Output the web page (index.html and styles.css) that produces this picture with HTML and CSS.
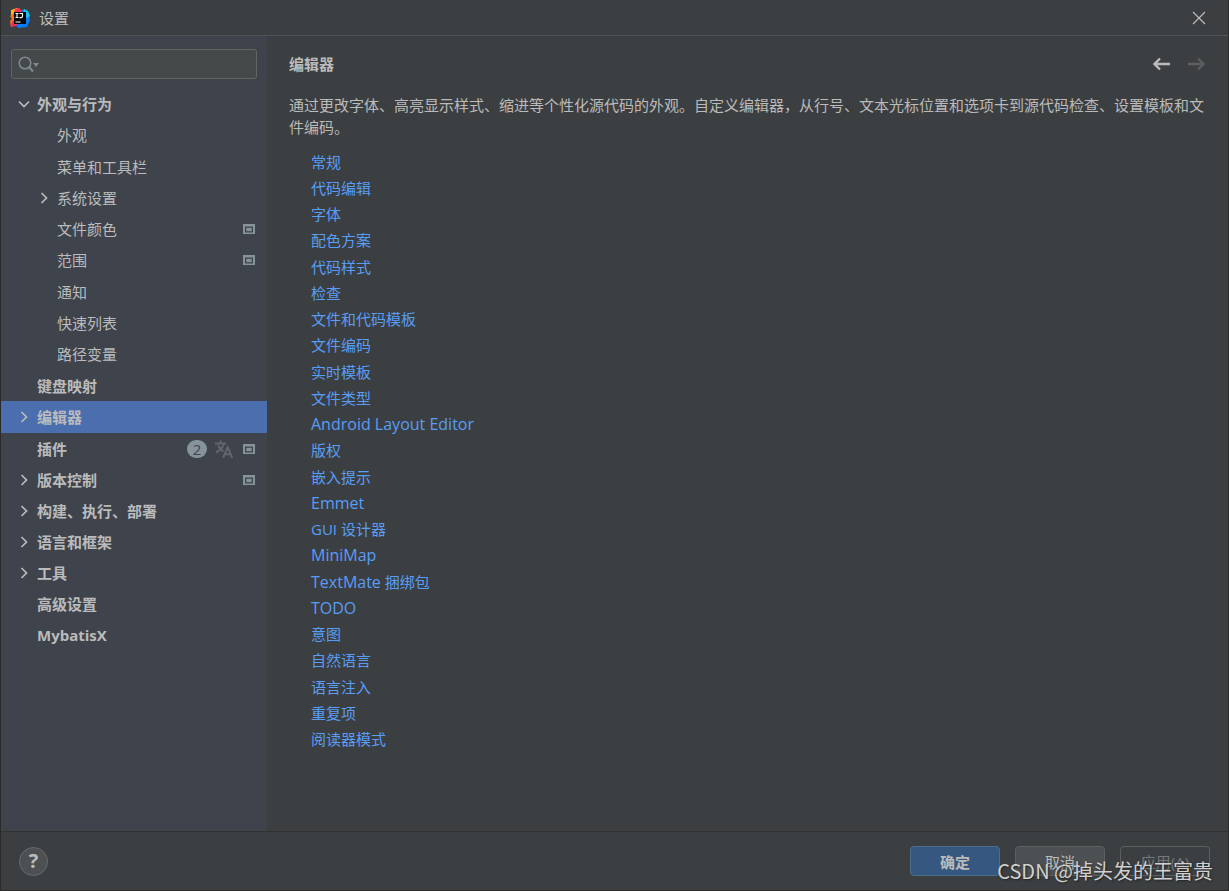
FILE: index.html
```html
<!DOCTYPE html>
<html lang="zh-CN">
<head>
<meta charset="utf-8">
<title>设置</title>
<link rel="stylesheet" href="styles.css">
</head>
<body>
<svg class="sprite" aria-hidden="true">
  <symbol id="chevron-right" viewBox="0 0 12 12"><path d="M3.500 1 8.500 6 3.500 11" fill="none" stroke="currentColor" stroke-width="1.700"/></symbol>
  <symbol id="chevron-down" viewBox="0 0 12 12"><path d="M1 3.500 6 8.500 11 3.500" fill="none" stroke="currentColor" stroke-width="1.700"/></symbol>
  <symbol id="project" viewBox="0 0 12 10"><path d="M0 0h12v10H0z" fill="#87939a"/><path d="M2 2.500h8v6H2z" fill="#3e434c"/><path d="M3.300 3.800h5.400v3.400H3.300z" fill="#87939a"/></symbol>
</svg>
<div class="window">
  <header class="titlebar">
    <svg class="logo" viewBox="0 0 20 20" aria-hidden="true">
      <path d="M1 2 7 0 11 3 6 10 1 9z" fill="#fdb60d"/>
      <path d="M0 8 4 5 7 12 5 16 1 19 0 13 2 11z" fill="#f97a12"/>
      <path d="M5 1 9 0 12 3 8 7 3 9z" fill="#fe315d"/>
      <path d="M2 13 8 12 11 17 6 18 1 19z" fill="#fe2857"/>
      <path d="M11 3 14 1 19 5 20 12 17 19 8 20 6 17 14 14z" fill="#087cfa"/>
      <path d="M14 1 18 3 20 8 17 10 13 6z" fill="#18c5e8"/>
      <path d="M4 4h12v12H4z" fill="#080808"/>
      <path d="M5.500 5.500h3M7 5.500v4M5.500 9.500h3M9.500 5.500h3v2.800q0 1.300-1.300 1.300H9.500M5.500 14h5" fill="none" stroke="#fff" stroke-width="1.100"/>
    </svg>
    <h1 class="title">设置</h1>
    <button class="icon-button close" type="button" aria-label="关闭">
      <svg class="close-icon" viewBox="0 0 14 14"><path d="M1 1 13 13M13 1 1 13" stroke="currentColor" stroke-width="1.200"/></svg>
    </button>
  </header>

  <div class="body">
    <nav class="sidebar" aria-label="设置类别">
      <label class="search">
        <svg class="search-icon" viewBox="0 0 22 18" aria-hidden="true"><circle cx="7" cy="8" r="5.800" fill="none" stroke="currentColor" stroke-width="1.500"/><path d="M11 12 15 16.500" stroke="currentColor" stroke-width="2"/><path d="M15 8h6l-3 4z" fill="currentColor"/></svg>
        <input class="search-input" type="text" aria-label="搜索设置">
      </label>
      <ul class="tree">
        <li>
          <a class="row" href="#"><svg class="arrow"><use href="#chevron-down"/></svg><span class="name">外观与行为</span></a>
          <ul class="subtree">
            <li><a class="row" href="#"><span class="name">外观</span></a></li>
            <li><a class="row" href="#"><span class="name">菜单和工具栏</span></a></li>
            <li><a class="row" href="#"><svg class="arrow"><use href="#chevron-right"/></svg><span class="name">系统设置</span></a></li>
            <li><a class="row" href="#"><span class="name">文件颜色</span><svg class="project"><use href="#project"/></svg></a></li>
            <li><a class="row" href="#"><span class="name">范围</span><svg class="project"><use href="#project"/></svg></a></li>
            <li><a class="row" href="#"><span class="name">通知</span></a></li>
            <li><a class="row" href="#"><span class="name">快速列表</span></a></li>
            <li><a class="row" href="#"><span class="name">路径变量</span></a></li>
          </ul>
        </li>
        <li><a class="row" href="#"><span class="name">键盘映射</span></a></li>
        <li><a class="row selected" href="#" aria-current="page"><svg class="arrow"><use href="#chevron-right"/></svg><span class="name">编辑器</span></a></li>
        <li><a class="row" href="#"><span class="name">插件</span><span class="badge">2</span><svg class="language" viewBox="0 0 18 18"><path d="M0 3.500h11M5.500 .5v3M9 3.500Q7.500 9 1 12.500M3 5.500Q5 9.500 8.500 11.500M8 18 12.700 7 17.200 18M9.800 14.200h5.800" fill="none" stroke="currentColor" stroke-width="2"/></svg><svg class="project"><use href="#project"/></svg></a></li>
        <li><a class="row" href="#"><svg class="arrow"><use href="#chevron-right"/></svg><span class="name">版本控制</span><svg class="project"><use href="#project"/></svg></a></li>
        <li><a class="row" href="#"><svg class="arrow"><use href="#chevron-right"/></svg><span class="name">构建、执行、部署</span></a></li>
        <li><a class="row" href="#"><svg class="arrow"><use href="#chevron-right"/></svg><span class="name">语言和框架</span></a></li>
        <li><a class="row" href="#"><svg class="arrow"><use href="#chevron-right"/></svg><span class="name">工具</span></a></li>
        <li><a class="row" href="#"><span class="name">高级设置</span></a></li>
        <li><a class="row" href="#"><span class="name">MybatisX</span></a></li>
      </ul>
    </nav>

    <main class="content">
      <div class="heading">
        <h2 class="heading-text">编辑器</h2>
        <button class="icon-button" type="button" aria-label="后退"><svg class="nav-icon" viewBox="0 0 18 14"><path d="M17 7H2M7 1.500 1.500 7 7 12.500" fill="none" stroke="currentColor" stroke-width="2.300"/></svg></button>
        <button class="icon-button" type="button" aria-label="前进" disabled><svg class="nav-icon" viewBox="0 0 18 14"><path d="M1 7h15M11 1.500 16.500 7 11 12.500" fill="none" stroke="currentColor" stroke-width="2.300"/></svg></button>
      </div>
      <p class="description">通过更改字体、高亮显示样式、缩进等个性化源代码的外观。自定义编辑器，从行号、文本光标位置和选项卡到源代码检查、设置模板和文件编码。</p>
      <ul class="links">
        <li><a href="#">常规</a></li>
        <li><a href="#">代码编辑</a></li>
        <li><a href="#">字体</a></li>
        <li><a href="#">配色方案</a></li>
        <li><a href="#">代码样式</a></li>
        <li><a href="#">检查</a></li>
        <li><a href="#">文件和代码模板</a></li>
        <li><a href="#">文件编码</a></li>
        <li><a href="#">实时模板</a></li>
        <li><a href="#">文件类型</a></li>
        <li><a href="#" class="latin">Android Layout Editor</a></li>
        <li><a href="#">版权</a></li>
        <li><a href="#">嵌入提示</a></li>
        <li><a href="#" class="latin">Emmet</a></li>
        <li><a href="#">GUI 设计器</a></li>
        <li><a href="#" class="latin">MiniMap</a></li>
        <li><a href="#"><span class="latin">TextMate</span> 捆绑包</a></li>
        <li><a href="#" class="latin">TODO</a></li>
        <li><a href="#">意图</a></li>
        <li><a href="#">自然语言</a></li>
        <li><a href="#">语言注入</a></li>
        <li><a href="#">重复项</a></li>
        <li><a href="#">阅读器模式</a></li>
      </ul>
    </main>
  </div>

  <footer class="footer">
    <button class="help" type="button" aria-label="帮助">?</button>
    <button class="button primary" type="button">确定</button>
    <button class="button" type="button">取消</button>
    <button class="button" type="button" disabled>应用(A)</button>
  </footer>
  <div class="watermark">CSDN @掉头发的王富贵</div>
</div>
</body>
</html>
```
FILE: styles.css
```css
* {
  box-sizing: border-box;
}

body {
  margin: 0;
  background: #3c3f41;
  color: #bbbbbb;
  font: 15px/22px "Open Sans", "Noto Sans CJK SC", sans-serif;
}

ul {
  margin: 0;
  padding: 0;
  list-style: none;
}

a {
  color: inherit;
  text-decoration: none;
}

button {
  font: inherit;
  color: inherit;
}

.sprite {
  display: none;
}

.window {
  position: relative;
  display: flex;
  flex-direction: column;
  min-height: 100vh;
  border: 1px solid #2b2b2b;
  border-top: 0;
}

.titlebar {
  display: flex;
  align-items: center;
  height: 36px;
  padding: 0 22px 0 9px;
  border-bottom: 1px solid #515456;
}

.logo {
  width: 20px;
  height: 20px;
}

.title {
  flex: 1;
  margin: 0 0 0 9px;
  font-size: 15px;
  font-weight: 400;
}

.icon-button {
  display: flex;
  padding: 0;
  border: 0;
  background: none;
}

.icon-button:disabled {
  color: #5c5e60;
}

.close-icon {
  width: 14px;
  height: 14px;
}

.body {
  display: flex;
  flex: 1;
}

.sidebar {
  flex: none;
  width: 266px;
  padding-top: 13px;
  background: #3e434c;
}

.search {
  display: flex;
  align-items: center;
  height: 30px;
  margin: 0 10px 9px;
  padding: 0 6px;
  border: 1px solid #646464;
  border-radius: 3px;
  background: #45494a;
}

.search-icon {
  flex: none;
  width: 22px;
  height: 18px;
  color: #7f8b91;
}

.search-input {
  flex: 1;
  min-width: 0;
  border: 0;
  outline: 0;
  background: none;
  color: inherit;
  font: inherit;
}

.tree {
  font-weight: 700;
}

.row {
  display: flex;
  align-items: center;
  gap: 8px;
  height: 31px;
  padding: 0 12px 0 36px;
}

.row.selected {
  height: 32px;
  background: #4b6eaf;
}

.subtree {
  padding-bottom: 1px;
  font-weight: 400;
}

.subtree li:nth-child(4n + 1) {
  margin-bottom: 1px;
}

.subtree .row {
  padding-left: 56px;
}

.name {
  flex: 1;
}

.arrow {
  width: 12px;
  height: 12px;
  margin: 0 -1px 0 -19px;
}

.project {
  width: 12px;
  height: 10px;
}

.badge {
  width: 20px;
  height: 18px;
  border-radius: 9px;
  background: #87939a;
  color: #3e434c;
  font-weight: 400;
  line-height: 18px;
  text-align: center;
}

.language {
  width: 18px;
  height: 18px;
  margin-right: 2px;
  color: #62666c;
}

.content {
  flex: 1;
  min-width: 0;
  padding: 17px 22px;
}

.heading {
  display: flex;
  align-items: center;
  gap: 16px;
  padding-right: 1px;
}

.heading-text {
  flex: 1;
  margin: 0;
  font-size: 15px;
  font-weight: 700;
}

.nav-icon {
  width: 18px;
  height: 14px;
}

.description {
  margin: 19px 0 11px;
}

.links {
  padding-left: 22px;
  color: #589df6;
  line-height: 26px;
}

.links li {
  height: 26px;
}

.links li:nth-child(4n) {
  margin-bottom: 1px;
}

.latin {
  font-size: 16px;
}

.footer {
  display: flex;
  align-items: center;
  gap: 15px;
  height: 59px;
  padding: 0 18px;
  border-top: 1px solid #323232;
}

.help {
  width: 29px;
  height: 29px;
  margin-right: auto;
  padding: 0;
  border: 1px solid #686b6d;
  border-radius: 50%;
  background: #4c5052;
  font-size: 20px;
  font-weight: 700;
  line-height: 24px;
}

.button {
  width: 90px;
  height: 30px;
  padding: 1px 0 0;
  border: 1px solid #5e6060;
  border-radius: 4px;
  background: #4c5052;
}

.button.primary {
  border-color: #4c708c;
  background: #365880;
  font-weight: 700;
}

.button:disabled {
  background: none;
  color: #777777;
}

.watermark {
  position: absolute;
  right: 15px;
  bottom: 5px;
  color: #d0d0d0;
  font: 20px/28px "Noto Sans CJK SC", sans-serif;
  text-shadow: 1px 1px 2px #222222;
  pointer-events: none;
}
```
